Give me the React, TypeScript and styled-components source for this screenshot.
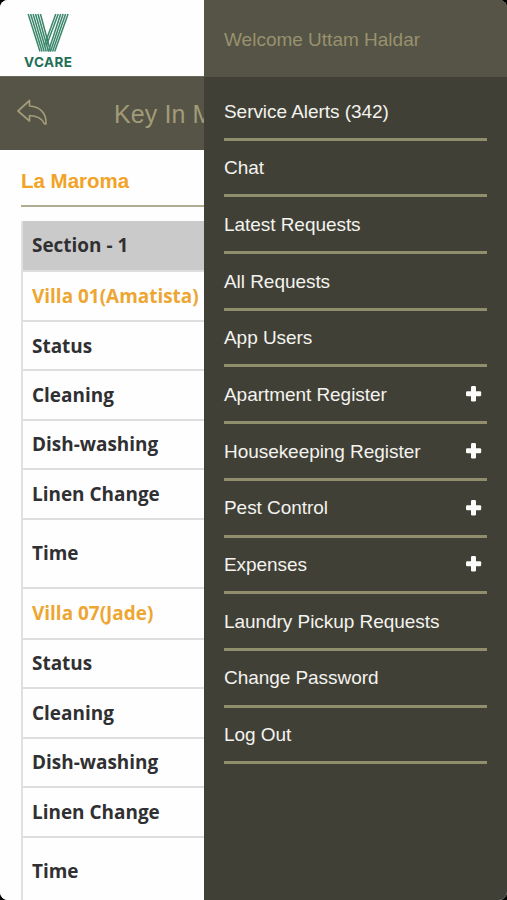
import React from "react";
import styled, { createGlobalStyle } from "styled-components";

const GlobalStyle = createGlobalStyle`
  * { box-sizing: border-box; }
  body { margin: 0; background: #000; }
`;

const Screen = styled.div`
  display: grid;
  grid-template-columns: 204px 1fr;
  width: 507px;
  height: 900px;
  overflow: hidden;
  border-radius: 8px;
  background: #fff;
  font-family: "Liberation Sans", Arial, sans-serif;
`;

const Page = styled.main`
  min-width: 0;
  height: 900px;
  overflow: hidden;
  background: #fefefe;
`;

const Brand = styled.header`
  height: 76px;
  padding: 13px 0 0 24px;
  svg { display: block; }
`;

const TitleBar = styled.div`
  display: flex;
  align-items: center;
  height: 74px;
  padding-left: 17px;
  background: #555446;
  border-top: 1px solid #69685c;
  overflow: hidden;
  white-space: nowrap;
`;

const BackIcon = styled.svg`
  flex: none;
  width: 31px;
  height: 27px;
  margin-bottom: 2px;
`;

const PageTitle = styled.h1`
  flex: 1;
  min-width: 0;
  overflow: hidden;
  margin: 1px 0 0 66px;
  font-size: 25px;
  font-weight: 400;
  letter-spacing: 0.1px;
  color: #a29b79;
`;

const Site = styled.h2`
  height: 57px;
  margin: 0 0 14px 21px;
  padding-top: 19px;
  border-bottom: 2px solid #b0ad92;
  font-size: 20.5px;
  line-height: 24px;
  font-weight: 700;
  color: #f2a326;
`;

const Register = styled.div`
  margin-left: 21px;
  border-left: 2px solid #e0e0e0;
  font-family: "Open Sans", "Noto Sans", sans-serif;
`;

const Cell = styled.div<{ $h: number; $kind?: "section" | "villa" }>`
  display: flex;
  align-items: center;
  height: ${(p) => p.$h}px;
  padding: 0 0 ${(p) => (p.$kind === "villa" ? 0 : p.$kind === "section" ? 1.5 : 0.4)}px 9px;
  border-bottom: 2px solid #dedede;
  background: ${(p) => (p.$kind === "section" ? "#cacaca" : "transparent")};
  color: ${(p) => (p.$kind === "villa" ? "#eda632" : "#303032")};
  font-size: 18.95px;
  line-height: 26px;
  font-weight: 700;
  white-space: nowrap;
`;

const Drawer = styled.aside`
  background: #414036;
`;

const Welcome = styled.div`
  display: flex;
  align-items: center;
  height: 77px;
  padding: 3px 0 0 20px;
  background: #555446;
  color: #98926e;
  font-size: 19px;
`;

const Menu = styled.ul`
  margin: 7px 20px 0;
  padding: 0;
  list-style: none;
`;

const MenuItem = styled.li`
  display: flex;
  align-items: center;
  justify-content: space-between;
  height: 56.7px;
  padding: 1.5px 5px 0 0;
  border-bottom: 3px solid #918e6d;
  color: #f3f3ef;
  font-size: 19px;
  letter-spacing: -0.05px;
  white-space: nowrap;
`;

const PlusIcon = styled.svg`
  width: 17px;
  height: 17px;
  margin-bottom: 2.5px;
`;

const strands = [0, 1, 2, 3, 4, 5];

const Logo = () => (
  <svg width="50" height="58" viewBox="0 0 50 58" aria-label="VCARE">
    <g fill="none" stroke="#3a866b" strokeWidth="1.5">
      {strands.map((i) => (
        <path key={`r${i}`} d={`M${31.8 + i * 2.45} 1 L${20.2 + i * 2.1} ${i < 2 ? 33 : 38.5}`} />
      ))}
      {strands.map((i) => (
        <path key={`l${i}`} d={`M${4.2 + i * 2.45} 1 L${16 + i * 2.1} 38.5`} />
      ))}
    </g>
    <text
      x="0"
      y="54.3"
      textLength="48"
      lengthAdjust="spacing"
      fill="#236e55"
      fontFamily="Inter, sans-serif"
      fontSize="13.5"
      fontWeight="700"
    >
      VCARE
    </text>
  </svg>
);

const cells: { label: string; h: number; kind?: "section" | "villa" }[] = [
  { label: "Section - 1", h: 51, kind: "section" },
  { label: "Villa 01(Amatista)", h: 50, kind: "villa" },
  { label: "Status", h: 49.4 },
  { label: "Cleaning", h: 49.5 },
  { label: "Dish-washing", h: 49.5 },
  { label: "Linen Change", h: 49.5 },
  { label: "Time", h: 69 },
  { label: "Villa 07(Jade)", h: 51, kind: "villa" },
  { label: "Status", h: 49.5 },
  { label: "Cleaning", h: 49.5 },
  { label: "Dish-washing", h: 49.5 },
  { label: "Linen Change", h: 49.5 },
  { label: "Time", h: 69 },
];

const menu: { label: string; expandable?: boolean }[] = [
  { label: "Service Alerts (342)" },
  { label: "Chat" },
  { label: "Latest Requests" },
  { label: "All Requests" },
  { label: "App Users" },
  { label: "Apartment Register", expandable: true },
  { label: "Housekeeping Register", expandable: true },
  { label: "Pest Control", expandable: true },
  { label: "Expenses", expandable: true },
  { label: "Laundry Pickup Requests" },
  { label: "Change Password" },
  { label: "Log Out" },
];

export default function App() {
  return (
    <>
      <GlobalStyle />
      <Screen>
        <Page>
          <Brand>
            <Logo />
          </Brand>
          <TitleBar>
            <BackIcon viewBox="0 0 31 27" fill="none" stroke="#a29b79" strokeWidth="1.7" strokeLinejoin="round">
              <path d="M1 12 L12.5 1.5 V7 C23 7.5 29.5 14 29 25 H27.5 C25 19 20 16.8 12.5 16.5 V22 Z" />
            </BackIcon>
            <PageTitle>Key In M</PageTitle>
          </TitleBar>
          <Site>La Maroma</Site>
          <Register>
            {cells.map((c, i) => (
              <Cell key={i} $h={c.h} $kind={c.kind}>
                {c.label}
              </Cell>
            ))}
          </Register>
        </Page>
        <Drawer>
          <Welcome>Welcome Uttam Haldar</Welcome>
          <Menu>
            {menu.map((m) => (
              <MenuItem key={m.label}>
                {m.label}
                {m.expandable && (
                  <PlusIcon viewBox="0 0 17 17" fill="#fbfbf9">
                    <rect x="6" y="1" width="5" height="15.5" rx="1.2" />
                    <rect x="1" y="6.2" width="15.2" height="5" rx="1.2" />
                  </PlusIcon>
                )}
              </MenuItem>
            ))}
          </Menu>
        </Drawer>
      </Screen>
    </>
  );
}
